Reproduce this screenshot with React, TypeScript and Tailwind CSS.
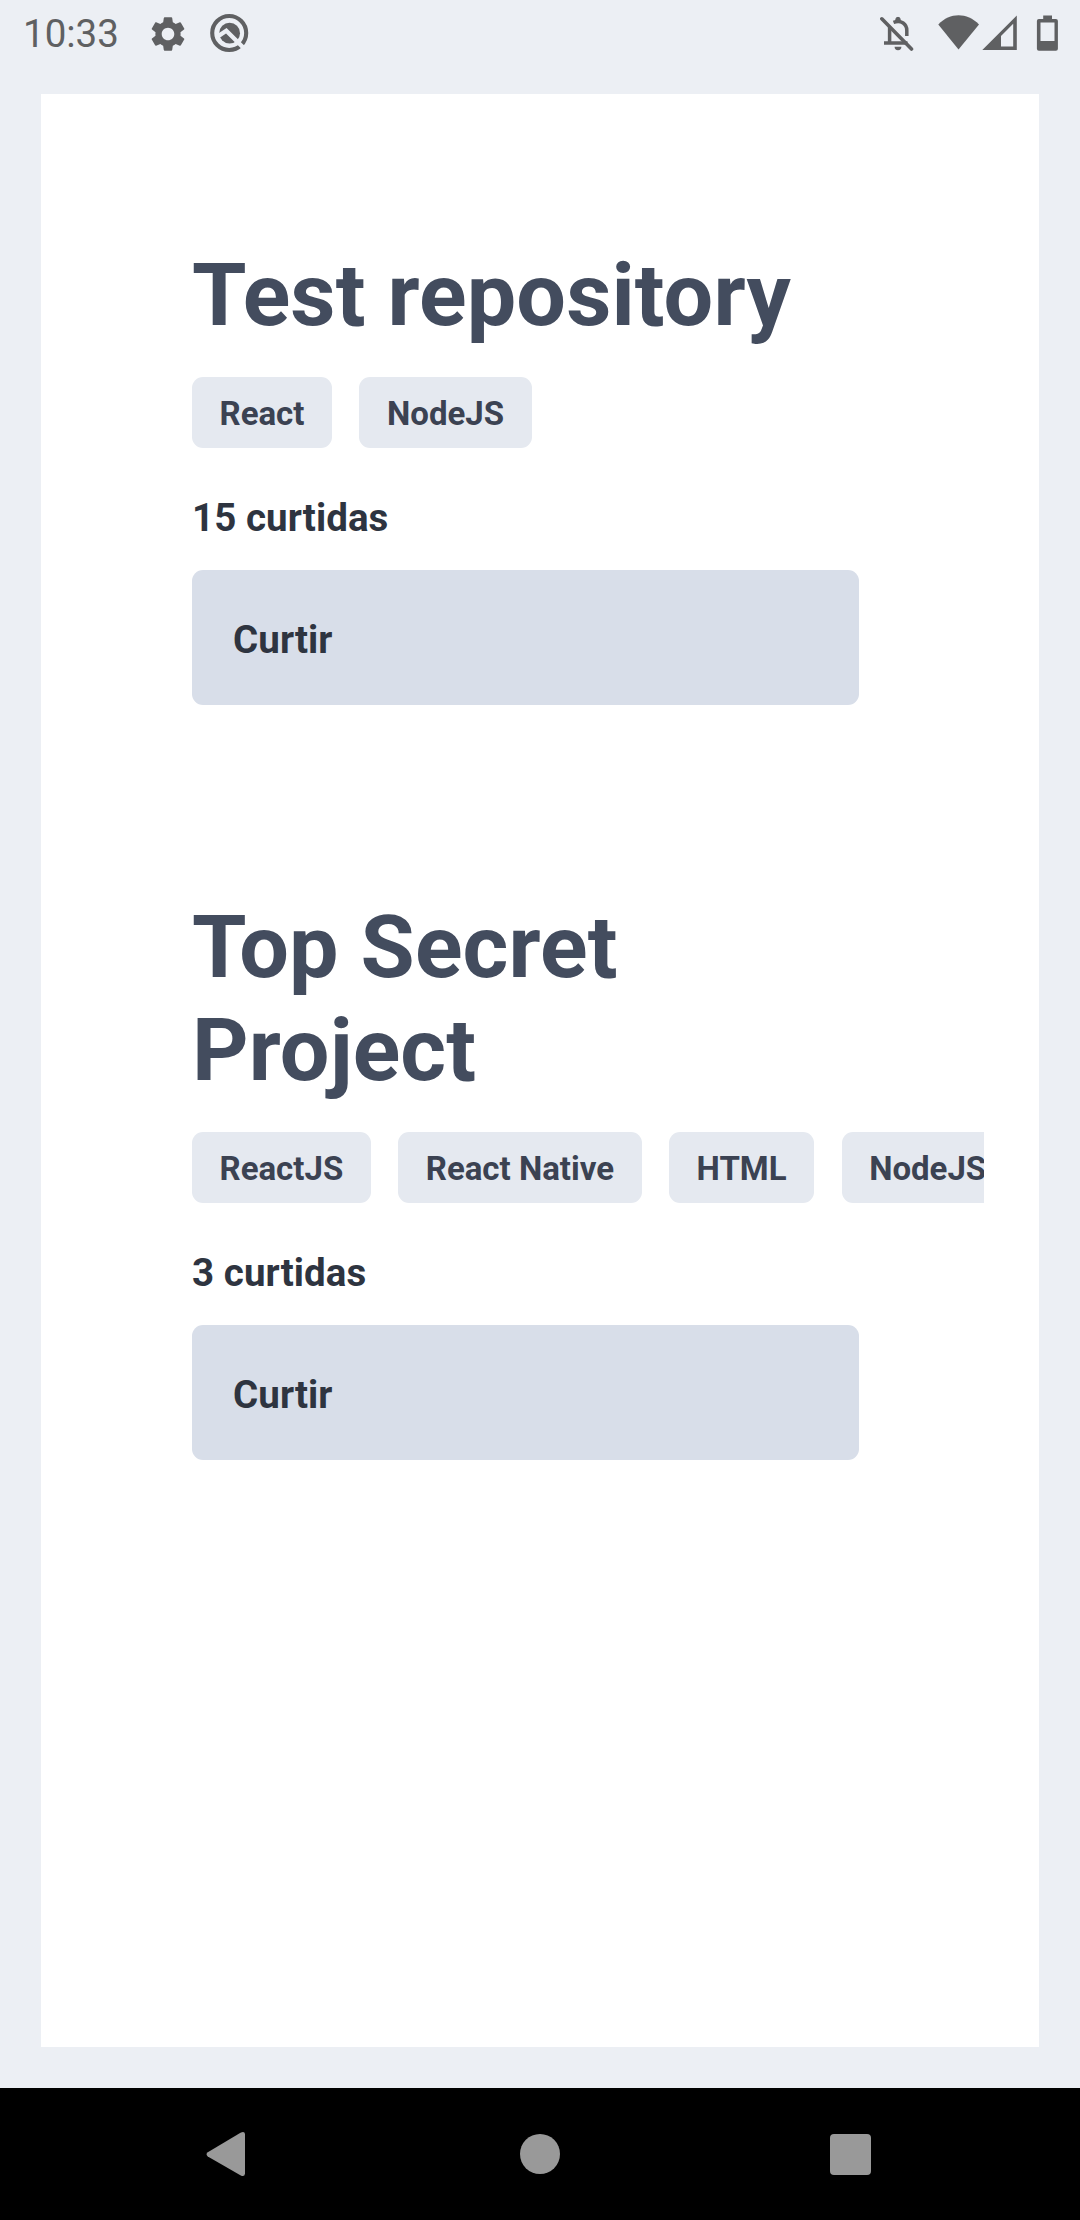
import React from "react";
import { MdSettings } from "react-icons/md";

type Repository = { title: string; techs: string[]; likes: number };

const repositories: Repository[] = [
  { title: "Test repository", techs: ["React", "NodeJS"], likes: 15 },
  { title: "Top Secret Project", techs: ["ReactJS", "React Native", "HTML", "NodeJS"], likes: 3 },
];

function BadgeIcon() {
  return (
    <svg className="ml-[20px] h-10 w-10" viewBox="209 13 40 40" fill="none">
      <circle cx="229.2" cy="33" r="17" stroke="#5f6062" strokeWidth="4.1" />
      <circle cx="229.6" cy="33.2" r="10.4" fill="#5f6062" />
      <path d="M217.5 36.6 226.3 30.8 246 50.3" stroke="#eceff4" strokeWidth="4.3" />
    </svg>
  );
}

function BellOffIcon() {
  return (
    <svg className="mt-px h-9 w-9" viewBox="880 16 36 36" fill="none" stroke="#5f6062" strokeWidth="3.5">
      <path d="M889.6 27v15M884 43h23.5M893.5 22.4c8-3 13.3 2 13.3 8V36" />
      <path d="M895.8 21v-1.5a2.2 2.2 0 0 1 4.4 0V21Z" fill="#5f6062" strokeWidth="1" />
      <path d="M881.8 18.8 911.5 49" strokeWidth="3.6" strokeLinecap="round" />
      <path d="M894.6 46.8h6.8a3.4 3.4 0 0 1-6.8 0Z" fill="#5f6062" stroke="none" />
    </svg>
  );
}

function StatusBar() {
  return (
    <header className="flex h-[66px] items-center pr-[21px] pl-[23px] text-[#5f6062]">
      <time className="w-[124px] text-[38.5px] leading-[45px]">10:33</time>
      <MdSettings className="mt-px size-[42px]" />
      <BadgeIcon />
      <div className="ml-auto flex items-center">
        <BellOffIcon />
        <svg className="ml-[22px] h-9 w-[42px]" viewBox="938 15 42 36" fill="currentColor">
          <path d="M938.3 24.5C950 12.3 967 12.3 979 24.5L958.5 49.5Z" />
        </svg>
        <svg className="ml-[2px] h-9 w-9" viewBox="982 15 36 36" fill="currentColor" fillRule="evenodd">
          <path d="M982.3 50 1016.8 15.5V50ZM1001 36V46.4H1013.2V23.8Z" />
        </svg>
        <svg className="ml-[18px] h-9 w-[23px]" viewBox="1036 15 23 36" fill="currentColor" fillRule="evenodd">
          <path d="M1043.2 15.4h8.8V19h3.9a2 2 0 0 1 2 2v27.8a2 2 0 0 1-2 2h-17a2 2 0 0 1-2-2V21a2 2 0 0 1 2-2h4.3ZM1040.5 22.4V41h14V22.4Z" />
        </svg>
      </div>
    </header>
  );
}

function RepositoryItem({ title, techs, likes }: Repository) {
  return (
    <article className="pb-[190px] pl-[151px]">
      <h2 className="w-[667px] text-[88px] leading-[103px] font-bold tracking-[0.12px] text-[#434c5e]">{title}</h2>
      <ul className="mt-[31px] mr-[55px] flex gap-[27.5px] overflow-hidden">
        {techs.map((tech) => (
          <li
            key={tech}
            className="h-[71px] shrink-0 rounded-[11px] bg-[#e5e9f0] px-[27.5px] text-[33px] leading-[73px] font-bold whitespace-nowrap text-[#3b4252]"
          >
            {tech}
          </li>
        ))}
      </ul>
      <p className="mt-[47px] text-[38.5px] leading-[45px] font-bold tracking-[0.07px] text-[#2e3440]">
        {likes} curtidas
      </p>
      <button className="mt-[30px] block h-[135px] w-[667px] rounded-[11px] bg-[#d8dee9] px-[41px] pt-[3px] text-left text-[38.5px] leading-[45px] font-bold tracking-[0.07px] text-[#2e3440]">
        Curtir
      </button>
    </article>
  );
}

function NavigationBar() {
  return (
    <nav className="grid h-[132px] grid-cols-[450px_180px_450px] items-center justify-items-center bg-black">
      <svg className="size-[48px]" viewBox="0 0 48 48" fill="#999">
        <path d="M6.8 22.3 39.5 2.7Q43.6.8 44 4V43.8Q43.6 47.2 39.8 45.6L6.8 26.4Q4.2 24.4 6.8 22.3Z" />
      </svg>
      <span className="size-[40px] rounded-full bg-[#999]" />
      <span className="mt-px mr-[9px] size-[41px] rounded-[4px] bg-[#999]" />
    </nav>
  );
}

export default function App() {
  return (
    <div className="flex h-[2220px] w-[1080px] flex-col overflow-hidden bg-[#eceff4] font-['Roboto',sans-serif]">
      <StatusBar />
      <main className="mx-[41px] mt-[28px] mb-[41px] flex-1 overflow-hidden bg-white pt-[149px]">
        {repositories.map((repository) => (
          <RepositoryItem key={repository.title} {...repository} />
        ))}
      </main>
      <NavigationBar />
    </div>
  );
}
